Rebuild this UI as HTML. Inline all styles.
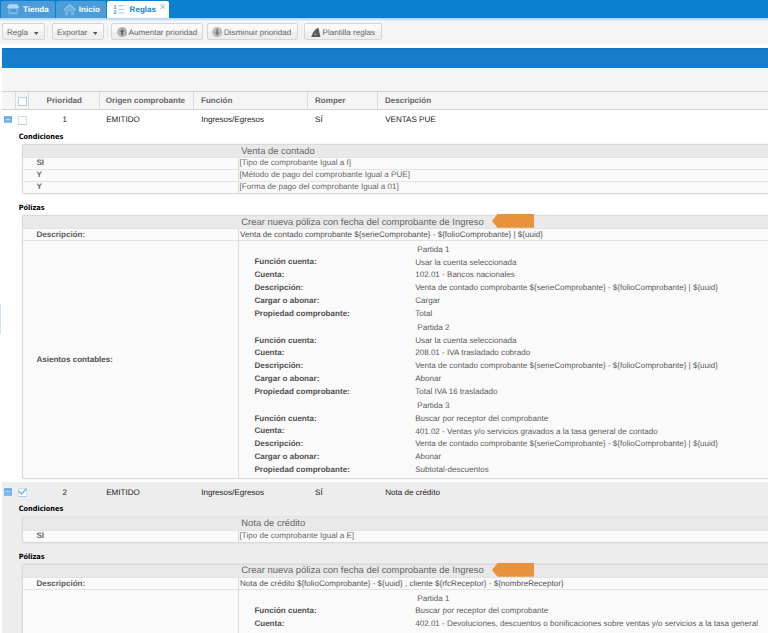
<!DOCTYPE html><html lang="es"><head><meta charset="utf-8"><title>Reglas</title><style>
*{box-sizing:border-box;margin:0;padding:0}
html,body{width:768px;height:633px;overflow:hidden;background:#fff}
body{position:relative;font-family:"Liberation Sans",sans-serif;font-size:8.07px;color:#1a1a1a;line-height:10px;text-rendering:geometricPrecision}
.a{position:absolute;white-space:nowrap}
.t{position:absolute;white-space:nowrap;height:10px;line-height:10px}
.b{font-weight:bold}
.g{color:#666}
.lbl{font-weight:bold;color:#505050}
.val{color:#5a5a5a}
.sec{font-family:"DejaVu Sans Condensed","DejaVu Sans",sans-serif;font-weight:bold;font-size:7.3px;color:#000}
.ttl{font-size:9.44px;color:#666}
.btn{position:absolute;top:22.9px;height:17.5px;border:0.7px solid #d6d6d6;border-radius:2px;background:linear-gradient(#fbfbfb 0%,#f8f8f8 48%,#efefef 52%,#eeeeee 100%);}
.sep{position:absolute;top:26.6px;height:11px;width:0.8px;background:#e9e9e9}
.tab{position:absolute;top:1.2px;height:16.6px;background:#4b9cd7;border-radius:2px 2px 0 0}
.hl{position:absolute;height:0.8px;background:#e3e3e3}
.vl{position:absolute;width:0.8px;background:#dcdcdc}
.cb{position:absolute;width:8.5px;height:9.1px;border:0.8px solid #c6e0f5;border-bottom-color:#a6cfee;background:#fff;border-radius:0.5px}
.exp{position:absolute;width:7.4px;height:7.2px;background:linear-gradient(#6fb1e4,#80bcea);border-radius:0.5px}
.exp:after{content:"";position:absolute;left:1.6px;right:1.6px;top:3px;height:1.1px;background:#b9daf3}
.box{position:absolute;border:0.7px solid #d9d9d9;border-radius:2px;background:#fafafa;box-shadow:0 0 1.5px rgba(0,0,0,.16)}
.hd{position:absolute;background:#e9e9e9}
</style></head><body>
<div class="a" style="left:0px;top:0px;width:768px;height:18px;background:#0b7fd0"></div>
<div class="a" style="left:0px;top:17.8px;width:768px;height:2.8px;background:linear-gradient(#a9d0ee,#eaf3fb)"></div>
<div class="tab" style="left:1.3px;width:53.7px"></div>
<div class="tab" style="left:56.3px;width:49.7px"></div>
<div class="tab" style="left:107.4px;width:61.4px;background:#fff"></div>
<div class="t b" style="left:22.90px;top:5.1px;color:#fff">Tienda</div>
<div class="t b" style="left:78.80px;top:5.1px;color:#fff">Inicio</div>
<div class="t b" style="left:129.60px;top:5.1px;color:#157fcc">Reglas</div>
<svg class="a" style="left:7px;top:4px" width="12.200" height="11" viewBox="0 0 12.200 11"><path d="M1.300 4v6.600h9.600V4zM3 5h6.250v2.900H3z" fill="#78b4e5" fill-rule="evenodd"/><path d="M2 .2h8.300L12 3v.6q0 .6-.7.600H.8q-.7 0-.7-.6V3z" fill="#b5d6f0"/></svg>
<svg class="a" style="left:62.500px;top:3.600px" width="13.400" height="12" viewBox="0 0 13.400 12"><path d="M1.800 6.600 6.700 2.400l4.700 4.200v4.800H8V8H5.500v3.400H1.800z" fill="#6fb1e4"/><path d="M.8 6.100 6.700.900l5.900 5.200" fill="none" stroke="#8ec4ec" stroke-width="1.500"/></svg>
<svg class="a" style="left:113.400px;top:4px" width="12" height="11" viewBox="0 0 12 11"><g stroke="#9dcaee" stroke-width="1"><path d="M5.350 1.700h6.250M5.350 5.400h6.250M5.350 9h6.250"/></g><g fill="#2f8bd4" font-size="5.400" font-weight="bold" font-family="Liberation Sans, sans-serif"><text x="0.400" y="4.900">1</text><text x="0.400" y="10">2</text></g></svg>
<svg class="a" style="left:159.700px;top:4px" width="5.600" height="5.400" viewBox="0 0 5.600 5.400"><path d="M.4.400l4.800 4.600M5.200.4.400 5" stroke="#9dcaee" stroke-width="1.100"/></svg>
<div class="a" style="left:0px;top:20.6px;width:768px;height:23.4px;background:#f5f5f5"></div>
<div class="btn" style="left:2.4px;width:42.2px"></div>
<div class="t g" style="left:6.90px;top:28.1px;">Regla</div>
<svg class="a" style="left:33.5px;top:31.800px" width="4.700" height="3" viewBox="0 0 4.700 3"><path d="M0 0h4.700L2.350 2.900z" fill="#555"/></svg>
<div class="btn" style="left:52.2px;width:51.4px"></div>
<div class="t g" style="left:56.90px;top:28.1px;">Exportar</div>
<svg class="a" style="left:92.8px;top:31.800px" width="4.700" height="3" viewBox="0 0 4.700 3"><path d="M0 0h4.700L2.350 2.900z" fill="#555"/></svg>
<div class="sep" style="left:47.3px"></div>
<div class="sep" style="left:107px"></div>
<div class="btn" style="left:111.4px;width:92px"></div>
<div class="t g" style="left:128.60px;top:28.1px;">Aumentar prioridad</div>
<svg class="a" style="left:116.800px;top:27.300px" width="10.400" height="10.400" viewBox="0 0 10.400 10.400"><circle cx="5.200" cy="5.200" r="5.100" fill="#b4b4b4"/><path d="M5.200 2 2.800 4.800h1.500V8.100h1.800V4.800h1.500z" fill="#636363"/></svg>
<div class="btn" style="left:207.2px;width:90.4px"></div>
<div class="t g" style="left:224.00px;top:28.1px;">Disminuir prioridad</div>
<svg class="a" style="left:212.200px;top:27.300px" width="10.400" height="10.400" viewBox="0 0 10.400 10.400"><circle cx="5.200" cy="5.200" r="5.100" fill="#bcbcbc"/><path d="M5.200 8.400 2.800 5.600h1.500V2.300h1.800V5.600h1.500z" fill="#7a7a7a"/></svg>
<div class="sep" style="left:301.3px"></div>
<div class="btn" style="left:304.3px;width:77.3px"></div>
<div class="t g" style="left:322.60px;top:28.1px;">Plantilla reglas</div>
<svg class="a" style="left:311px;top:27px" width="10" height="10.400" viewBox="0 0 10 10.400"><path d="M7.400 .4 9.400 9.900H.2L2.200 5.200Q3.800 2.400 7.400 .4z" fill="#5a5a5a"/><circle cx="4.300" cy="7.300" r=".75" fill="#cfcfcf"/></svg>
<div class="a" style="left:2.3px;top:47.8px;width:766px;height:20.2px;background:#167dcb;border-top:0.9px solid #0c76c7"></div>
<div class="a" style="left:2.3px;top:67.8px;width:766px;height:23.2px;background:#f5f5f5"></div>
<div class="a" style="left:2.3px;top:91px;width:766px;height:18.8px;background:#f5f5f5;border-top:0.75px solid #d4d4d4;border-bottom:0.75px solid #d2d2d2"></div>
<div class="vl" style="left:15.4px;top:91.6px;height:17.600px;background:#dadada"></div>
<div class="vl" style="left:28.4px;top:91.6px;height:17.600px;background:#dadada"></div>
<div class="vl" style="left:98.7px;top:91.6px;height:17.600px;background:#dadada"></div>
<div class="vl" style="left:193px;top:91.6px;height:17.600px;background:#dadada"></div>
<div class="vl" style="left:307.4px;top:91.6px;height:17.600px;background:#dadada"></div>
<div class="vl" style="left:377.4px;top:91.6px;height:17.600px;background:#dadada"></div>
<div class="cb" style="left:18px;top:96.9px;border-color:#a6d0f0"></div>
<div class="t b g" style="left:46.60px;top:96.1px;">Prioridad</div>
<div class="t b g" style="left:105.80px;top:96.1px;">Origen comprobante</div>
<div class="t b g" style="left:201.00px;top:96.1px;">Función</div>
<div class="t b g" style="left:315.00px;top:96.1px;">Romper</div>
<div class="t b g" style="left:385.00px;top:96.1px;">Descripción</div>
<div class="exp" style="left:4.3px;top:115.70px"></div>
<div class="cb" style="left:18px;top:115.70px"></div>
<div class="t " style="left:62.60px;top:115.1px;">1</div>
<div class="t " style="left:106.20px;top:115.1px;">EMITIDO</div>
<div class="t " style="left:201.20px;top:115.1px;">Ingresos/Egresos</div>
<div class="t " style="left:315.00px;top:115.1px;">SÍ</div>
<div class="t " style="left:385.20px;top:115.1px;">VENTAS PUE</div>
<div class="t sec" style="left:18.70px;top:132.1px;">Condiciones</div>
<div class="box" style="left:22.1px;top:144.00px;width:760px;height:49.70px"></div>
<div class="hd" style="left:22.8px;top:144.70px;width:750px;height:12.80px;border-radius:1.5px 0 0 0"></div>
<div class="t ttl" style="left:241.30px;top:146.1px;">Venta de contado</div>
<div class="vl" style="left:237.6px;top:157.50px;height:35.7px"></div>
<div class="hl" style="left:22.8px;width:750px;top:157.10px"></div>
<div class="t b g" style="left:36.40px;top:158.1px;">SI</div>
<div class="t g" style="left:239.60px;top:158.1px;">[Tipo de comprobante Igual a I]</div>
<div class="hl" style="left:22.8px;width:750px;top:169.00px"></div>
<div class="t b g" style="left:36.40px;top:170.1px;">Y</div>
<div class="t g" style="left:239.60px;top:170.1px;">[Método de pago del comprobante Igual a PUE]</div>
<div class="hl" style="left:22.8px;width:750px;top:180.90px"></div>
<div class="t b g" style="left:36.40px;top:182.1px;">Y</div>
<div class="t g" style="left:239.60px;top:182.1px;">[Forma de pago del comprobante Igual a 01]</div>
<div class="t sec" style="left:18.70px;top:203.1px;">Pólizas</div>
<div class="box" style="left:22.1px;top:215.20px;width:760px;height:263.60px"></div>
<div class="hd" style="left:22.8px;top:215.90px;width:750px;height:12.70px;border-radius:1.5px 0 0 0"></div>
<div class="t ttl" style="left:241.30px;top:217.1px;">Crear nueva póliza con fecha del comprobante de Ingreso</div>
<svg class="a" style="left:491.900px;top:214.10px" width="42.400" height="14" viewBox="0 0 42.400 14"><path d="M0 7 5.500 0H42.200V13.700H5.500z" fill="#e8923c"/></svg>
<div class="hl" style="left:22.8px;width:750px;top:228.20px"></div>
<div class="t b" style="left:36.40px;top:230.1px;color:#5a5a5a">Descripción:</div>
<div class="t " style="left:240.00px;top:230.1px;color:#505050">Venta de contado comprobante ${serieComprobante} - ${folioComprobante} | ${uuid}</div>
<div class="hl" style="left:22.8px;width:750px;top:240.00px"></div>
<div class="vl" style="left:237.6px;top:228.60px;height:249.50px"></div>
<div class="t b" style="left:36.40px;top:355.1px;color:#505050">Asientos contables:</div>
<div class="t val" style="left:417.30px;top:245.1px;">Partida 1</div>
<div class="t lbl" style="left:254.40px;top:257.1px;">Función cuenta:</div>
<div class="t val" style="left:415.20px;top:258.1px;">Usar la cuenta seleccionada</div>
<div class="t lbl" style="left:254.40px;top:270.1px;">Cuenta:</div>
<div class="t val" style="left:415.20px;top:270.1px;">102.01 - Bancos nacionales</div>
<div class="t lbl" style="left:254.40px;top:283.1px;">Descripción:</div>
<div class="t val" style="left:415.20px;top:283.1px;">Venta de contado comprobante ${serieComprobante} - ${folioComprobante} | ${uuid}</div>
<div class="t lbl" style="left:254.40px;top:296.1px;">Cargar o abonar:</div>
<div class="t val" style="left:415.20px;top:296.1px;">Cargar</div>
<div class="t lbl" style="left:254.40px;top:309.1px;">Propiedad comprobante:</div>
<div class="t val" style="left:415.20px;top:309.1px;">Total</div>
<div class="t val" style="left:417.30px;top:323.1px;">Partida 2</div>
<div class="t lbl" style="left:254.40px;top:336.1px;">Función cuenta:</div>
<div class="t val" style="left:415.20px;top:336.1px;">Usar la cuenta seleccionada</div>
<div class="t lbl" style="left:254.40px;top:348.1px;">Cuenta:</div>
<div class="t val" style="left:415.20px;top:348.1px;">208.01 - IVA trasladado cobrado</div>
<div class="t lbl" style="left:254.40px;top:361.1px;">Descripción:</div>
<div class="t val" style="left:415.20px;top:361.1px;">Venta de contado comprobante ${serieComprobante} - ${folioComprobante} | ${uuid}</div>
<div class="t lbl" style="left:254.40px;top:374.1px;">Cargar o abonar:</div>
<div class="t val" style="left:415.20px;top:374.1px;">Abonar</div>
<div class="t lbl" style="left:254.40px;top:387.1px;">Propiedad comprobante:</div>
<div class="t val" style="left:415.20px;top:387.1px;">Total IVA 16 trasladado</div>
<div class="t val" style="left:417.30px;top:401.1px;">Partida 3</div>
<div class="t lbl" style="left:254.40px;top:414.1px;">Función cuenta:</div>
<div class="t val" style="left:415.20px;top:414.1px;">Buscar por receptor del comprobante</div>
<div class="t lbl" style="left:254.40px;top:426.1px;">Cuenta:</div>
<div class="t val" style="left:415.20px;top:427.1px;">401.02 - Ventas y/o servicios gravados a la tasa general de contado</div>
<div class="t lbl" style="left:254.40px;top:439.1px;">Descripción:</div>
<div class="t val" style="left:415.20px;top:439.1px;">Venta de contado comprobante ${serieComprobante} - ${folioComprobante} | ${uuid}</div>
<div class="t lbl" style="left:254.40px;top:452.1px;">Cargar o abonar:</div>
<div class="t val" style="left:415.20px;top:452.1px;">Abonar</div>
<div class="t lbl" style="left:254.40px;top:465.1px;">Propiedad comprobante:</div>
<div class="t val" style="left:415.20px;top:465.1px;">Subtotal-descuentos</div>
<div class="a" style="left:2.2px;top:481.7px;width:766px;height:160px;background:#ededed"></div>
<div class="exp" style="left:4.3px;top:488.40px"></div>
<div class="cb" style="left:18px;top:488.00px"></div>
<svg class="a" style="left:18px;top:488.00px" width="9.500" height="9" viewBox="0 0 9.500 9"><path d="M0.700 3.200 3.400 5.900 8.400 0.900" fill="none" stroke="#7ab9e8" stroke-width="1.700"/></svg>
<div class="t " style="left:62.60px;top:488.1px;">2</div>
<div class="t " style="left:106.20px;top:488.1px;">EMITIDO</div>
<div class="t " style="left:201.20px;top:488.1px;">Ingresos/Egresos</div>
<div class="t " style="left:315.00px;top:488.1px;">SÍ</div>
<div class="t " style="left:385.20px;top:488.1px;">Nota de crédito</div>
<div class="t sec" style="left:18.70px;top:504.1px;">Condiciones</div>
<div class="box" style="left:22.1px;top:516.70px;width:760px;height:25.90px"></div>
<div class="hd" style="left:22.8px;top:517.40px;width:750px;height:12.80px;border-radius:1.5px 0 0 0"></div>
<div class="t ttl" style="left:241.30px;top:518.1px;">Nota de crédito</div>
<div class="vl" style="left:237.6px;top:530.20px;height:11.9px"></div>
<div class="hl" style="left:22.8px;width:750px;top:529.80px"></div>
<div class="t b g" style="left:36.40px;top:531.1px;">SI</div>
<div class="t g" style="left:239.60px;top:531.1px;">[Tipo de comprobante Igual a E]</div>
<div class="t sec" style="left:18.70px;top:552.1px;">Pólizas</div>
<div class="box" style="left:22.1px;top:564.10px;width:760px;height:120.00px"></div>
<div class="hd" style="left:22.8px;top:564.80px;width:750px;height:12.70px;border-radius:1.5px 0 0 0"></div>
<div class="t ttl" style="left:241.30px;top:565.1px;">Crear nueva póliza con fecha del comprobante de Ingreso</div>
<svg class="a" style="left:491.900px;top:563.00px" width="42.400" height="14" viewBox="0 0 42.400 14"><path d="M0 7 5.500 0H42.200V13.700H5.500z" fill="#e8923c"/></svg>
<div class="hl" style="left:22.8px;width:750px;top:577.10px"></div>
<div class="t b" style="left:36.40px;top:579.1px;color:#5a5a5a">Descripción:</div>
<div class="t " style="left:240.00px;top:579.1px;color:#505050">Nota de crédito ${folioComprobante} - ${uuid} , cliente ${rfcReceptor} - ${nombreReceptor}</div>
<div class="hl" style="left:22.8px;width:750px;top:588.90px"></div>
<div class="vl" style="left:237.6px;top:577.50px;height:105.90px"></div>
<div class="t b" style="left:36.40px;top:632.1px;color:#505050">Asientos contables:</div>
<div class="t val" style="left:417.30px;top:594.1px;">Partida 1</div>
<div class="t lbl" style="left:254.40px;top:606.1px;">Función cuenta:</div>
<div class="t val" style="left:415.20px;top:606.1px;">Buscar por receptor del comprobante</div>
<div class="t lbl" style="left:254.40px;top:619.1px;">Cuenta:</div>
<div class="t val" style="left:415.20px;top:619.1px;">402.01 - Devoluciones, descuentos o bonificaciones sobre ventas y/o servicios a la tasa general</div>
<div class="t lbl" style="left:254.40px;top:632.1px;">Descripción:</div>
<div class="a" style="left:0px;top:303.7px;width:1px;height:31.3px;background:#cfe5f7"></div>
</body></html>
